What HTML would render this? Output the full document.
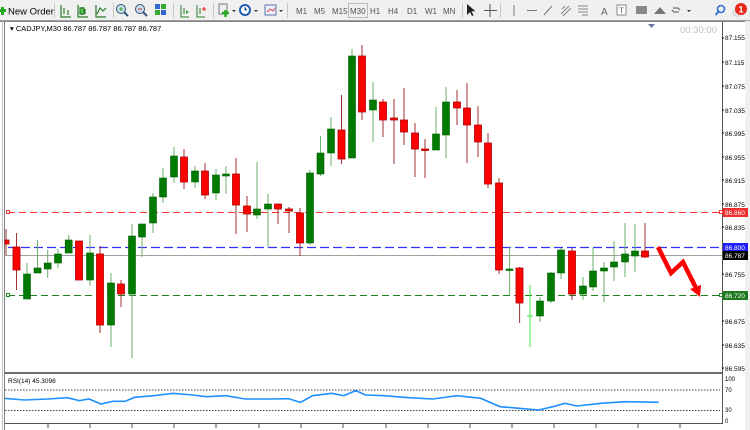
<!DOCTYPE html>
<html><head><meta charset="utf-8"><style>
html,body{margin:0;padding:0;width:750px;height:430px;overflow:hidden;background:#fff;font-family:"Liberation Sans",sans-serif}
</style></head><body>
<svg width="750" height="430" viewBox="0 0 750 430" xmlns="http://www.w3.org/2000/svg" font-family="Liberation Sans, sans-serif">
<rect x="0" y="0" width="750" height="21" fill="#f0f0f0"/>
<line x1="0" y1="20.5" x2="750" y2="20.5" stroke="#a0a0a0"/>
<rect x="1" y="7" width="3" height="8" fill="#2a2"/><rect x="-1" y="9" width="7" height="3" fill="#2a2"/>
<text x="8" y="14.5" font-size="9.5" fill="#000">New Order</text>
<g stroke="#c8c8c8"><line x1="54.5" y1="3" x2="54.5" y2="18"/><line x1="113.5" y1="3" x2="113.5" y2="18"/><line x1="173.5" y1="3" x2="173.5" y2="18"/><line x1="213.5" y1="3" x2="213.5" y2="18"/><line x1="287.5" y1="3" x2="287.5" y2="18"/><line x1="462.5" y1="3" x2="462.5" y2="18"/><line x1="500.5" y1="3" x2="500.5" y2="18"/></g>
<g stroke="#2a7a2a" fill="none" stroke-width="1.2">
<path d="M61 5v12h10M64 8v6M68 10v5"/><path d="M78 5v12h10M82 7v8M85 9v5"/><rect x="80" y="8" width="4" height="6" fill="#5c5"/><path d="M96 5v12h10M97 14l3-6 3 3 3-3"/>
</g>
<circle cx="121" cy="9" r="4.5" fill="#cde" stroke="#357"/><line x1="124" y1="12" x2="128" y2="16" stroke="#357" stroke-width="2"/><path d="M119 9h4M121 7v4" stroke="#3a3"/>
<circle cx="140" cy="9" r="4.5" fill="#cde" stroke="#357"/><line x1="143" y1="12" x2="147" y2="16" stroke="#357" stroke-width="2"/><path d="M138 9h4" stroke="#c33"/>
<rect x="155" y="4" width="5" height="5" fill="#36c"/><rect x="161" y="4" width="5" height="5" fill="#3a3"/><rect x="155" y="10" width="5" height="5" fill="#3a3"/><rect x="161" y="10" width="5" height="5" fill="#36c"/>
<path d="M181 5v12h8M184 8v6" stroke="#2a7a2a" fill="none"/><path d="M186 10l3 2-3 2z" fill="#3a3"/>
<path d="M197 5v12h8M200 8v6" stroke="#2a7a2a" fill="none"/><path d="M202 9h4M204 7v4" stroke="#d22"/>
<rect x="219" y="4" width="8" height="10" fill="#eee" stroke="#777"/><path d="M222 13h7M225.5 10v7" stroke="#2a2" stroke-width="2.5"/><path d="M232 10l2 2 2-2z" fill="#333"/>
<circle cx="245" cy="10" r="5" fill="#fff" stroke="#2060b0" stroke-width="2"/><path d="M245 7v3h2" stroke="#2060b0"/><path d="M254 10l2 2 2-2z" fill="#333"/>
<rect x="265" y="5" width="11" height="10" fill="#eef" stroke="#57a"/><path d="M267 12l3-3 3 2 2-3" stroke="#d44" fill="none"/><path d="M279 10l2 2 2-2z" fill="#333"/>
<g font-size="8" fill="#555"><text x="296" y="14">M1</text><text x="314" y="14">M5</text><text x="332" y="14">M15</text><text x="350" y="14">M30</text><text x="370" y="14">H1</text><text x="388" y="14">H4</text><text x="407" y="14">D1</text><text x="425" y="14">W1</text><text x="443" y="14">MN</text></g>
<rect x="348.5" y="3.5" width="19" height="14" fill="none" stroke="#bbb"/>
<path d="M467 4l0 11 3-3 2 4 1.5-.7-2-4 4 0z" fill="#222"/>
<path d="M490 4v13M484 10.5h13" stroke="#555"/>
<path d="M514 5v11M527 10.5h10M544 15l8-9" stroke="#777"/>
<path d="M561 14l8-8M563 16l8-8M562 9l3-3" stroke="#888"/>
<path d="M578 6h10M578 9h10M578 12h10M582 15h6" stroke="#888"/>
<text x="601" y="15" font-size="10" fill="#666">A</text>
<rect x="617" y="5" width="9" height="10" fill="#fff" stroke="#888"/><text x="619" y="13.5" font-size="8" fill="#666">T</text>
<rect x="636" y="6" width="11" height="8" rx="1" fill="#888"/>
<path d="M654 14l6-7 6 7z" fill="#777"/>
<path d="M673 8h5l2 2M679 12h-5l-2-2" stroke="#555" fill="none"/><path d="M687 10l2 2 2-2z" fill="#333"/>
<circle cx="721" cy="9" r="3.5" fill="none" stroke="#2a6fd0" stroke-width="1.6"/><line x1="718.5" y1="11.5" x2="715.5" y2="15" stroke="#2a6fd0" stroke-width="1.8"/>
<ellipse cx="737" cy="13" rx="5" ry="4" fill="#ddd"/>
<circle cx="741" cy="9" r="6" fill="#e8281c"/><text x="741" y="12.5" font-size="9" fill="#fff" text-anchor="middle" font-weight="bold">1</text>

<line x1="0" y1="21.5" x2="745" y2="21.5" stroke="#808080"/>
<line x1="4.5" y1="21" x2="4.5" y2="430" stroke="#808080"/>
<line x1="2.5" y1="21" x2="2.5" y2="430" stroke="#c0c0c0"/>
<line x1="722.5" y1="22" x2="722.5" y2="424" stroke="#555"/>
<rect x="745" y="21" width="5" height="409" fill="#f0f0f0"/>
<text x="10" y="31" font-size="7.5" fill="#000">▾ CADJPY,M30  86.787 86.787 86.787 86.787</text>
<text x="680" y="33" font-size="9.5" fill="#c0c0c0">00:30:00</text>
<path d="M648 24h7l-3.5 4z" fill="#6a7a9a"/>

<g font-size="6.5" fill="#000">
<text x="725" y="40">87.155</text><text x="725" y="65">87.115</text><text x="725" y="89">87.075</text><text x="725" y="113">87.035</text><text x="725" y="136">86.995</text><text x="725" y="160">86.955</text><text x="725" y="183">86.915</text><text x="725" y="207">86.875</text><text x="725" y="230">86.835</text><text x="725" y="277">86.755</text><text x="725" y="324">86.675</text><text x="725" y="348">86.635</text><text x="725" y="371">86.595</text>
</g>
<g stroke="#000"><path d="M722 38h2M722 62h2M722 86h2M722 110h2M722 133h2M722 157h2M722 180h2M722 204h2M722 227h2M722 274h2M722 321h2M722 345h2M722 368h2"/></g>

<line x1="8" y1="212.5" x2="720" y2="212.5" stroke="#ff3030" stroke-dasharray="7,4"/>
<line x1="8" y1="247.5" x2="720" y2="247.5" stroke="#3030ff" stroke-dasharray="9,4" stroke-width="1.3"/>
<line x1="5" y1="255.5" x2="722" y2="255.5" stroke="#a0a0a0"/>
<line x1="8" y1="295.5" x2="720" y2="295.5" stroke="#208020" stroke-dasharray="7,4"/>
<rect x="6.5" y="210.5" width="3" height="3" fill="#fff" stroke="#f33"/>
<rect x="6.5" y="293.5" width="3" height="3" fill="#fff" stroke="#282"/>
<rect x="719.5" y="210.5" width="3" height="3" fill="#fff" stroke="#f33"/>
<rect x="719.5" y="293.5" width="3" height="3" fill="#fff" stroke="#282"/>
<rect x="723" y="208" width="25" height="9" fill="#f03030"/><text x="725" y="215" font-size="6.5" fill="#fff">86.860</text>
<rect x="723" y="243" width="25" height="9" fill="#1e1eff"/><text x="725" y="250" font-size="6.5" fill="#fff">86.800</text>
<rect x="723" y="251" width="25" height="9" fill="#000"/><text x="725" y="258" font-size="6.5" fill="#fff">86.787</text>
<rect x="723" y="291" width="25" height="9" fill="#1e7a1e"/><text x="725" y="298" font-size="6.5" fill="#fff">86.720</text>

<g>
<g stroke="#a03030"><path d="M6 229V255M16.5 233V290M79 241V280M100 246V333M121 280V307M184 149V189M205 163V199M236 158V234M247 196V232M278 204V224M289 207V233M300 208V256M341.5 95V164M362 45V120M383 99V137M394 99V164M404 88V145M415 123V177M425 139V178M457 90V125M467 83V163M478 106V157M488 133V188M499 178V274M519.6 267V323M572 248V300M645 223V258"/></g>
<g stroke="#6ab06a"><path d="M27 263V299M37.5 240V273M47.7 250V278M58 249V268M68.7 235V253M90 235V286M111 273V347M132 224V358M142 224V257M153 193V233M163 168V203M174 147V183M195 166V188M216 169V200M226 166V194M257 162V219M268 194V247M310 170V245M320.5 136V176M331 117V166M352 49V158M373 82V142M436 107V150M446 87V158M509.6 247V295M540 297V322M551 272V303M561 248V279M583 277V300M593 248V291M604 262V302M614 241V281M625 223V277M635 224V272"/></g>
<path d="M530 285V347M527 316h6" stroke="#40e040"/>
<g fill="#ff0000" stroke="#b00000" stroke-width="0.8">
<rect x="5" y="240" width="4" height="4"/><rect x="13" y="247" width="7" height="23"/><rect x="75.5" y="241" width="7" height="39"/><rect x="96.5" y="254" width="7" height="71"/><rect x="117.5" y="284" width="7" height="10"/><rect x="180.5" y="157" width="7" height="25"/><rect x="201.5" y="171" width="7" height="24"/><rect x="232.5" y="174" width="7" height="31"/><rect x="243.5" y="206" width="7" height="8"/><rect x="274.5" y="204" width="7" height="5"/><rect x="285.5" y="209" width="7" height="2"/><rect x="296.5" y="213" width="7" height="30"/><rect x="338" y="130" width="7" height="29"/><rect x="358.5" y="56" width="7" height="56"/><rect x="379.5" y="102" width="7" height="18"/><rect x="390.5" y="118" width="7" height="2"/><rect x="400.5" y="120" width="7" height="12"/><rect x="411.5" y="133" width="7" height="16"/><rect x="421.5" y="149" width="7" height="1.5"/><rect x="453.5" y="102" width="7" height="6"/><rect x="463.5" y="108" width="7" height="17"/><rect x="474.5" y="125" width="7" height="17"/><rect x="484.5" y="143" width="7" height="41"/><rect x="495.5" y="183" width="7" height="87"/><rect x="516" y="268" width="7" height="35"/><rect x="568.5" y="251" width="7" height="43"/><rect x="641.5" y="251" width="7" height="6"/>
</g>
<g fill="#007a00" stroke="#006000" stroke-width="0.6">
<rect x="23.5" y="274" width="7" height="25"/><rect x="34" y="268" width="7" height="5"/><rect x="44.2" y="263" width="7" height="6"/><rect x="54.5" y="254" width="7" height="9"/><rect x="65.2" y="240" width="7" height="13"/><rect x="86.5" y="253" width="7" height="27"/><rect x="107.5" y="283" width="7" height="42"/><rect x="128.5" y="236" width="7" height="58"/><rect x="138.5" y="224" width="7" height="13"/><rect x="149.5" y="197" width="7" height="26"/><rect x="159.5" y="178" width="7" height="19"/><rect x="170.5" y="156" width="7" height="21"/><rect x="191.5" y="171" width="7" height="11"/><rect x="212.5" y="175" width="7" height="18"/><rect x="222.5" y="174" width="7" height="2"/><rect x="253.5" y="209" width="7" height="6"/><rect x="264.5" y="204" width="7" height="5"/><rect x="306.5" y="173" width="7" height="70"/><rect x="317" y="153" width="7" height="21"/><rect x="327.5" y="129" width="7" height="24"/><rect x="348.5" y="56" width="7" height="102"/><rect x="369.5" y="100" width="7" height="10"/><rect x="432.5" y="134" width="7" height="16"/><rect x="442.5" y="102" width="7" height="33"/><rect x="506" y="269" width="7" height="1.5"/><rect x="536.5" y="301" width="7" height="15"/><rect x="547.5" y="273" width="7" height="28"/><rect x="557.5" y="250" width="7" height="23"/><rect x="579.5" y="286" width="7" height="8"/><rect x="589.5" y="271" width="7" height="16"/><rect x="600.5" y="268" width="7" height="3"/><rect x="610.5" y="262" width="7" height="5"/><rect x="621.5" y="254" width="7" height="8"/><rect x="631.5" y="251" width="7" height="5"/>
</g>
</g>
<path d="M658 247L671 273L683 262L697 290" stroke="#ff0000" stroke-width="4.5" fill="none" stroke-linejoin="miter"/>
<path d="M690 289L700 297L701 285z" fill="#ff0000"/>

<rect x="5" y="372" width="717" height="2" fill="#707070"/>
<text x="8" y="383" font-size="6.5" fill="#000">RSI(14) 45.3098</text>
<line x1="5" y1="390" x2="720" y2="390" stroke="#444" stroke-dasharray="1.5,1.5"/>
<line x1="5" y1="410.5" x2="720" y2="410.5" stroke="#444" stroke-dasharray="1.5,1.5"/>
<g font-size="6" fill="#000"><text x="725" y="381">100</text><text x="725" y="392">70</text><text x="725" y="412">30</text><text x="725" y="423">0</text></g>
<g transform="translate(0,360) scale(0.4808,0.3333)">
<polyline fill="none" stroke="#2090ff" stroke-width="1.6" vector-effect="non-scaling-stroke" points="10,115 50,120 100,117 140,113 165,122 185,117 210,132 235,124 260,124 280,112 320,107 360,100 400,105 430,110 470,107 510,117 560,117 600,116 625,127 650,107 690,100 715,107 740,92 760,105 800,107 850,113 900,117 950,107 1000,115 1040,140 1080,145 1120,150 1150,140 1175,130 1200,138 1250,130 1300,125 1370,127"/>
</g>
<line x1="5" y1="423.5" x2="722" y2="423.5" stroke="#555"/>
<g stroke="#555"><path d="M48 424v4M90 424v4M132 424v4M174 424v4M216 424v4M259 424v4M301 424v4M343 424v4M386 424v4M428 424v4M470 424v4M512 424v4M554 424v4M596 424v4M638 424v4M680 424v4"/></g>
</svg>
</body></html>
